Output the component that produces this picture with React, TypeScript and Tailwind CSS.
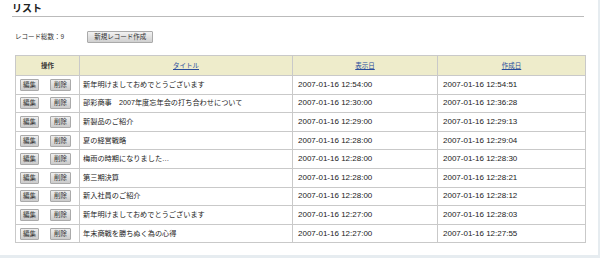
import React from "react";

type Row = { title: string; shown: string; created: string };

const rows: Row[] = [
  { title: "新年明けましておめでとうございます", shown: "2007-01-16 12:54:00", created: "2007-01-16 12:54:51" },
  { title: "部彩商事　2007年度忘年会の打ち合わせについて", shown: "2007-01-16 12:30:00", created: "2007-01-16 12:36:28" },
  { title: "新製品のご紹介", shown: "2007-01-16 12:29:00", created: "2007-01-16 12:29:13" },
  { title: "夏の経営戦略", shown: "2007-01-16 12:28:00", created: "2007-01-16 12:29:04" },
  { title: "梅雨の時期になりました…", shown: "2007-01-16 12:28:00", created: "2007-01-16 12:28:30" },
  { title: "第三期決算", shown: "2007-01-16 12:28:00", created: "2007-01-16 12:28:21" },
  { title: "新入社員のご紹介", shown: "2007-01-16 12:28:00", created: "2007-01-16 12:28:12" },
  { title: "新年明けましておめでとうございます", shown: "2007-01-16 12:27:00", created: "2007-01-16 12:28:03" },
  { title: "年末商戦を勝ちぬく為の心得", shown: "2007-01-16 12:27:00", created: "2007-01-16 12:27:55" },
];

const font = { fontFamily: '"Liberation Sans", "Noto Sans CJK JP", sans-serif' };

const SmallButton: React.FC<{ label: string; className?: string }> = ({ label, className }) => (
  <button
    className={`h-[12px] p-0 whitespace-nowrap text-[6.5px] leading-[10px] text-[#333] bg-gradient-to-b from-[#eeeeee] to-[#cbcbcb] border border-[#aaaaaa] rounded-[1px] ${className ?? ""}`}
  >
    {label}
  </button>
);

const HeaderLink: React.FC<{ label: string }> = ({ label }) => (
  <a href="#" className="text-[#2a4d9c] underline">
    {label}
  </a>
);

export default function App() {
  return (
    <div className="w-[600px] h-[258px] bg-[#e6ecf0]" style={font}>
      <div className="w-[598px] h-[255px] bg-white pt-[3px]">
        <h1 className="ml-[12px] text-[10px] font-bold text-[#222] leading-[12px]">リスト</h1>
        <div className="ml-[12px] mr-[14px] mt-[1px] border-t border-[#bbbbbb]" />
        <div className="flex items-center ml-[15px] mt-[13px] h-[13px]">
          <span className="text-[6.5px] text-[#333] whitespace-nowrap">レコード総数：9</span>
          <button className="ml-[23px] h-[12px] w-[66px] p-0 whitespace-nowrap text-[6.5px] leading-[10px] text-[#333] bg-gradient-to-b from-[#f2f2f2] to-[#d0d0d0] border border-[#aaaaaa] rounded-[1px]">
            新規レコード作成
          </button>
        </div>
        <table className="ml-[15px] mt-[12px] w-[570px] border-collapse border border-[#c9c9c9] table-fixed">
          <colgroup>
            <col className="w-[64px]" />
            <col className="w-[213px]" />
            <col className="w-[145px]" />
            <col className="w-[148px]" />
          </colgroup>
          <thead>
            <tr className="bg-[#eeeccb] text-[6.5px] leading-[10px]">
              <th className="h-[20px] border border-[#c9c9c9] font-bold text-[#333]">操作</th>
              <th className="h-[20px] border border-[#c9c9c9] font-normal">
                <HeaderLink label="タイトル" />
              </th>
              <th className="h-[20px] border border-[#c9c9c9] font-normal">
                <HeaderLink label="表示日" />
              </th>
              <th className="h-[20px] border border-[#c9c9c9] font-normal">
                <HeaderLink label="作成日" />
              </th>
            </tr>
          </thead>
          <tbody>
            {rows.map((r, i) => (
              <tr key={i} className="leading-[12px]">
                <td className="h-[18.6px] border border-[#c9c9c9] pl-[4px]">
                  <div className="flex items-center">
                    <SmallButton label="編集" className="w-[19px]" />
                    <SmallButton label="削除" className="w-[21px] ml-[11px]" />
                  </div>
                </td>
                <td className="h-[18.6px] border border-[#c9c9c9] pl-[3px] text-[7.2px] text-[#222] whitespace-nowrap">{r.title}</td>
                <td className="h-[18.6px] border border-[#c9c9c9] pl-[5px] text-[8px] text-[#222]">{r.shown}</td>
                <td className="h-[18.6px] border border-[#c9c9c9] pl-[5px] text-[8px] text-[#222]">{r.created}</td>
              </tr>
            ))}
          </tbody>
        </table>
      </div>
    </div>
  );
}
